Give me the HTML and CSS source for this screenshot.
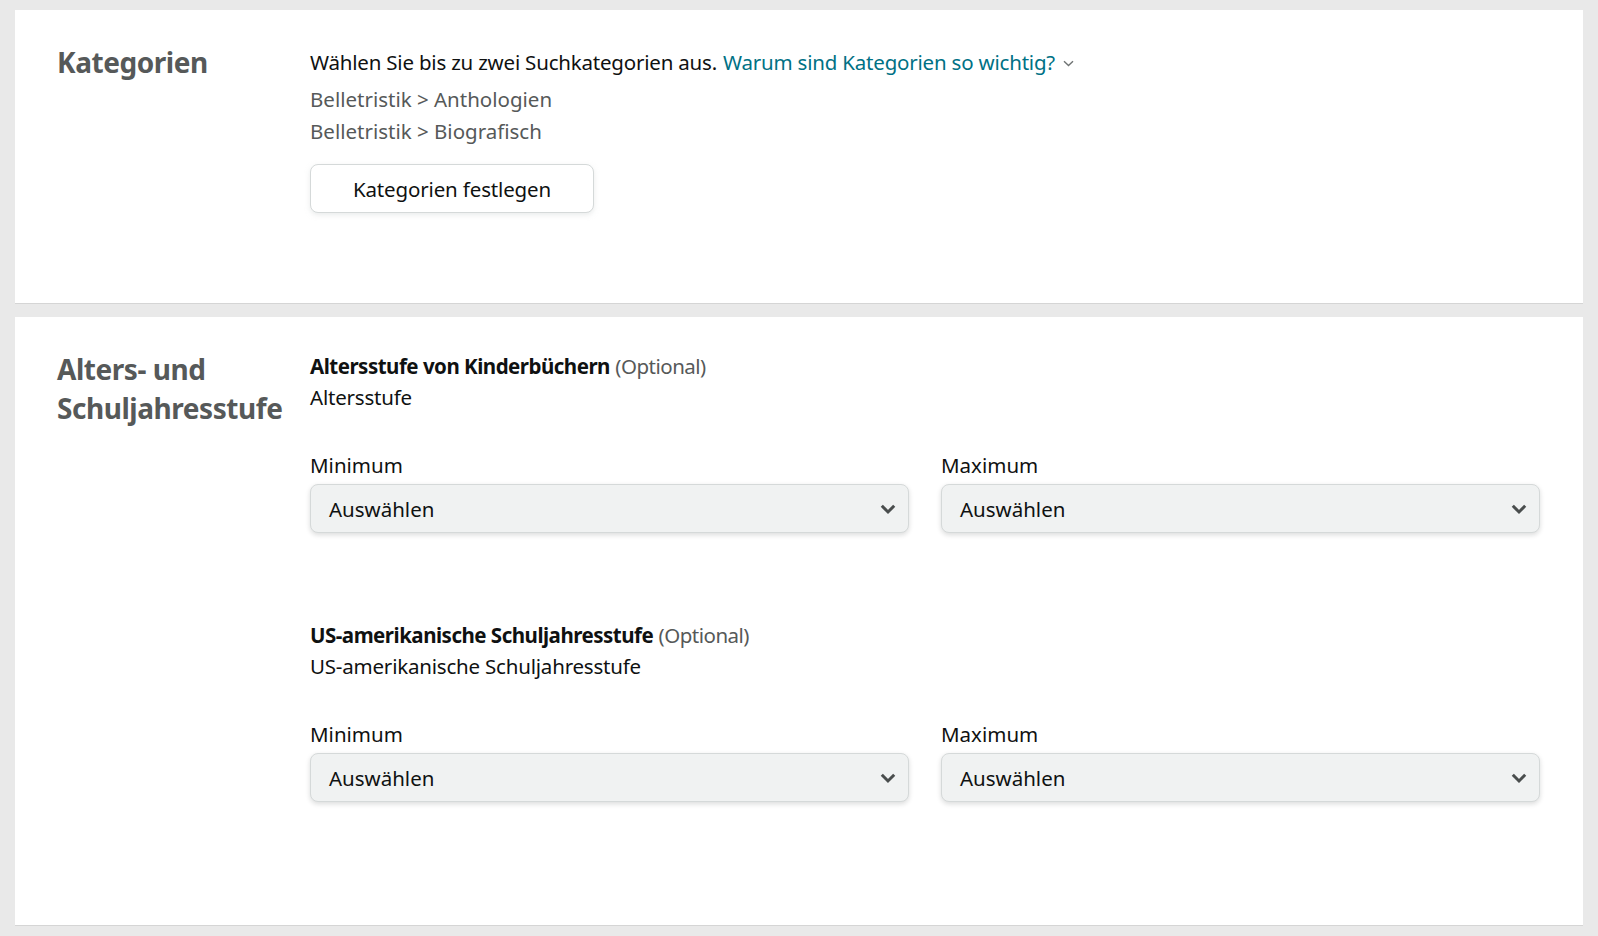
FILE: index.html
```html
<!DOCTYPE html>
<html lang="de">
<head>
<meta charset="utf-8">
<title>Kategorien</title>
<link rel="stylesheet" href="styles.css">
</head>
<body>
<main class="page">
  <section class="panel panel-cat">
    <h2 class="panel-title">Kategorien</h2>
    <div class="panel-body">
      <p class="intro">Wählen Sie bis zu zwei Suchkategorien aus. <a class="link" href="#">Warum sind Kategorien so wichtig?</a><svg class="link-chev" width="11" height="7" viewBox="0 0 11 7"><path d="M1 1.2 L5.5 5.5 L10 1.2" fill="none" stroke="#6f7373" stroke-width="1.4"/></svg></p>
      <ul class="cat-list">
        <li>Belletristik &gt; Anthologien</li>
        <li>Belletristik &gt; Biografisch</li>
      </ul>
      <button class="btn" type="button">Kategorien festlegen</button>
    </div>
  </section>

  <section class="panel panel-age">
    <h2 class="panel-title">Alters- und Schuljahresstufe</h2>
    <div class="panel-body">
      <div class="group">
        <div class="group-label"><strong>Altersstufe von Kinderbüchern</strong> <span class="opt">(Optional)</span></div>
        <div class="group-sub">Altersstufe</div>
        <div class="range">
          <div class="field">
            <div class="field-label">Minimum</div>
            <div class="select"><span>Auswählen</span><svg class="chev" width="16" height="11" viewBox="0 0 16 11"><path d="M1.8 1.8 L8 8 L14.2 1.8" fill="none" stroke="#494d4d" stroke-width="3"/></svg></div>
          </div>
          <div class="field">
            <div class="field-label">Maximum</div>
            <div class="select"><span>Auswählen</span><svg class="chev" width="16" height="11" viewBox="0 0 16 11"><path d="M1.8 1.8 L8 8 L14.2 1.8" fill="none" stroke="#494d4d" stroke-width="3"/></svg></div>
          </div>
        </div>
      </div>
      <div class="group group-2">
        <div class="group-label"><strong>US-amerikanische Schuljahresstufe</strong> <span class="opt">(Optional)</span></div>
        <div class="group-sub">US-amerikanische Schuljahresstufe</div>
        <div class="range">
          <div class="field">
            <div class="field-label">Minimum</div>
            <div class="select"><span>Auswählen</span><svg class="chev" width="16" height="11" viewBox="0 0 16 11"><path d="M1.8 1.8 L8 8 L14.2 1.8" fill="none" stroke="#494d4d" stroke-width="3"/></svg></div>
          </div>
          <div class="field">
            <div class="field-label">Maximum</div>
            <div class="select"><span>Auswählen</span><svg class="chev" width="16" height="11" viewBox="0 0 16 11"><path d="M1.8 1.8 L8 8 L14.2 1.8" fill="none" stroke="#494d4d" stroke-width="3"/></svg></div>
          </div>
        </div>
      </div>
    </div>
  </section>
</main>
</body>
</html>
```
FILE: styles.css
```css
* { box-sizing: border-box; }
html, body { margin: 0; padding: 0; }
body {
  background: #e9e9e9;
  font-family: "Noto Sans", "Open Sans", sans-serif;
  font-size: 20.5px;
  line-height: 32px;
  color: #0f1111;
}
.page {
  padding: 10px 15px 11px;
  display: flex;
  flex-direction: column;
  gap: 13px;
}
.panel {
  background: #fff;
  border-bottom: 1px solid #d5d5d5;
  display: flex;
  padding: 34px 43px 0 42px;
}
.panel-cat { height: 294px; }
.panel-age { height: 609px; }
.panel-title {
  margin: -1px 0 0;
  width: 253px;
  flex: none;
  font-size: 28px;
  line-height: 39px;
  font-weight: 700;
  color: #565959;
  letter-spacing: -0.45px;
}
.panel-age .panel-title { padding-right: 20px; }
.panel-body { flex: 1; min-width: 0; }
.intro {
  margin: 2px 0 0;
  display: flex;
  align-items: center;
  letter-spacing: -0.2px;
}
.intro .link { margin-left: 6px; }
.link { color: #007185; text-decoration: none; }
.link-chev { margin-left: 8px; margin-top: 2px; }
.cat-list {
  list-style: none;
  margin: 5px 0 0;
  padding: 0;
  color: #565959;
}
.btn {
  margin-top: 17px;
  width: 284px;
  height: 49px;
  display: flex;
  align-items: center;
  justify-content: center;
  background: #fff;
  border: 1px solid #d5d9d9;
  border-radius: 8px;
  box-shadow: 0 2px 5px rgba(213, 217, 217, 0.5);
  font-family: inherit;
  font-size: 20.5px;
  letter-spacing: -0.15px;
  color: #0f1111;
  padding: 0;
}
.group { margin-top: -1px; }
.group-2 { margin-top: 86px; }
.group-label strong { font-weight: 700; letter-spacing: -0.5px; }
.opt { color: #565959; letter-spacing: -0.5px; }
.group-sub { margin-top: -1px; letter-spacing: -0.2px; }
.range {
  margin-top: 36px;
  display: grid;
  grid-template-columns: 1fr 1fr;
  gap: 32px;
}
.field-label { margin-bottom: 3px; }
.select {
  height: 49px;
  display: flex;
  align-items: center;
  justify-content: space-between;
  background: #f0f2f2;
  border: 1px solid #d5d9d9;
  border-radius: 8px;
  box-shadow: 0 2px 5px rgba(15, 17, 17, 0.15);
  padding: 0 12px 0 18px;
}
.chev { flex: none; margin-top: 1px; }
```
